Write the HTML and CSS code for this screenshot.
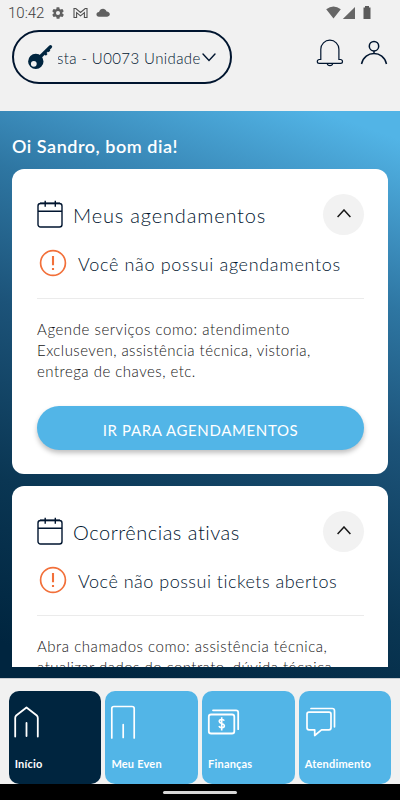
FILE: index.html
```html
<!DOCTYPE html>
<html lang="pt-BR">
<head>
<meta charset="utf-8">
<meta name="viewport" content="width=device-width, initial-scale=1">
<title>Início</title>
<link rel="stylesheet" href="styles.css">
</head>
<body>
<div class="app">
  <div class="status">
    <span class="time">10:42</span>
    <svg class="gear" width="14" height="14" viewBox="0 0 24 24"><path d="M19.4 13a7.600 7.600 0 0 0 0-2l2.100-1.700c.2-.1.3-.4.1-.6l-2-3.500c-.1-.2-.4-.3-.6-.2l-2.500 1a7.300 7.300 0 0 0-1.700-1l-.4-2.600a.5.5 0 0 0-.5-.4h-4a.5.5 0 0 0-.5.400L9.200 5a8 8 0 0 0-1.700 1L5 5c-.2-.1-.5 0-.6.200l-2 3.500c-.1.200-.1.500.1.600L4.600 11a8 8 0 0 0 0 2l-2.100 1.700c-.2.100-.2.400-.1.600l2 3.500c.1.200.4.300.6.200l2.500-1c.5.400 1.100.7 1.700 1l.4 2.600c0 .2.200.4.500.4h4c.2 0 .5-.2.500-.4l.4-2.600c.6-.3 1.200-.6 1.700-1l2.500 1c.2.100.5 0 .6-.2l2-3.500c.1-.2.100-.5-.1-.6zM12 15.500a3.500 3.500 0 1 1 0-7 3.500 3.500 0 0 1 0 7z" fill="#606060"/></svg>
    <svg class="mail" width="15" height="12" viewBox="0 0 15 12"><path d="M1 10.500v-9h1.800l4.700 4 4.700-4H14v9h-2.600V5.600L7.500 8.900 3.600 5.600v4.900z" fill="none" stroke="#505050" stroke-width="1.100"/></svg>
    <svg class="cloud" width="14" height="9" viewBox="0 0 14 9"><path d="M3 8.700C-.6 8.600-.2 4 3 4 4 .3 9-.7 10.600 3.500c3.800 0 4.500 5 .6 5.200z" fill="#606060"/></svg>
    <svg class="signals" width="46" height="14" viewBox="0 0 46 14"><path d="M.2 3.200Q7.500-2 14.800 3.200L7.500 12.500zM29 1v12H16.800z" fill="#666"/><path d="M39 0h4v1.500h1.500V13h-7V1.500H39z" fill="#5b5b5b"/></svg>
  </div>
  <header class="header">
    <div class="unit">
      <svg width="26" height="26" viewBox="0 0 26 26"><path d="M23.500 2.700 13 13" stroke="#00253f" stroke-width="3.300" stroke-linecap="round"/><path d="m17.300 8.500 2.400 2.400M20.500 5.300l2 2" stroke="#00253f" stroke-width="2.400"/><path fill-rule="evenodd" d="M8.800 9.700a7.700 7.700 0 1 0 0 15.400 7.700 7.700 0 0 0 0-15.400zM6.800 16.900a2.900 2.900 0 1 1 0 5.800 2.900 2.900 0 0 1 0-5.800z" fill="#00253f"/></svg>
      <span class="unit-window"><span class="unit-name">sta - U0073 Unidade</span></span>
      <svg class="down" width="14" height="9" viewBox="0 0 14 9"><path d="m1 1 6 6.500L13 1" fill="none" stroke="#00152f" stroke-width="1.400" stroke-linecap="round"/></svg>
    </div>
    <svg class="bell" width="28" height="30" viewBox="0 0 28 30"><path d="M4.800 21.500V11.200a9 9 0 0 1 18.100 0v10.300h1.700a1.900 1.900 0 0 1 0 3.800H3.200a1.900 1.900 0 0 1 0-3.800z" fill="none" stroke="#00152f" stroke-width="1.200"/><path d="M11.200 25.500c.5 2.900 5 2.900 5.500 0" fill="none" stroke="#00152f" stroke-width="1.200"/></svg>
    <svg class="user" width="28" height="26" viewBox="0 0 28 26"><circle cx="14" cy="6.200" r="4.700" fill="none" stroke="#00152f" stroke-width="1.500"/><path d="M14 11v2.500M1.500 24c3-14 22-14 25 0" fill="none" stroke="#00152f" stroke-width="1.500"/></svg>
  </header>
  <main class="main">
    <div class="scroll">
      <h1 class="greeting">Oi Sandro, bom dia!</h1>
      <section class="card">
        <div class="card-head">
          <svg class="cal" width="26" height="28" viewBox="0 0 26 28"><rect x="1" y="3.500" width="24" height="23.500" rx="2.500" fill="none" stroke="#00152f" stroke-width="1.400"/><path d="M1 11.300h24M8.200.8v6M18.300.8v6" stroke="#00152f" stroke-width="1.400"/><path d="M3 3.300h20" stroke="#00152f" stroke-width="1.600"/></svg>
          <h2 class="title t1">Meus agendamentos</h2>
          <span class="toggle"><svg width="14" height="9" viewBox="0 0 14 9"><path d="m.6 8 6.400-7 6.400 7" fill="none" stroke="#181818" stroke-width="1.500"/></svg></span>
        </div>
        <div class="notice">
          <svg width="28" height="28" viewBox="0 0 28 28"><circle cx="14" cy="14" r="12.400" fill="none" stroke="#f2703a" stroke-width="1.700"/><path d="M14 7v9.300M14 19v2" stroke="#f2703a" stroke-width="2.100"/></svg>
          <span class="n1">Você não possui agendamentos</span>
        </div>
        <p class="desc">
          <span class="d1">Agende serviços como: atendimento</span>
          <span class="d2">Excluseven, assistência técnica, vistoria,</span>
          <span class="d3">entrega de chaves, etc.</span>
        </p>
        <button class="cta">IR PARA AGENDAMENTOS</button>
      </section>
      <section class="card">
        <div class="card-head">
          <svg class="cal" width="26" height="28" viewBox="0 0 26 28"><rect x="1" y="3.500" width="24" height="23.500" rx="2.500" fill="none" stroke="#00152f" stroke-width="1.400"/><path d="M1 11.300h24M8.200.8v6M18.300.8v6" stroke="#00152f" stroke-width="1.400"/><path d="M3 3.300h20" stroke="#00152f" stroke-width="1.600"/></svg>
          <h2 class="title t2">Ocorrências ativas</h2>
          <span class="toggle"><svg width="14" height="9" viewBox="0 0 14 9"><path d="m.6 8 6.400-7 6.400 7" fill="none" stroke="#181818" stroke-width="1.500"/></svg></span>
        </div>
        <div class="notice">
          <svg width="28" height="28" viewBox="0 0 28 28"><circle cx="14" cy="14" r="12.400" fill="none" stroke="#f2703a" stroke-width="1.700"/><path d="M14 7v9.300M14 19v2" stroke="#f2703a" stroke-width="2.100"/></svg>
          <span class="n2">Você não possui tickets abertos</span>
        </div>
        <p class="desc">
          <span class="d4">Abra chamados como: assistência técnica,</span>
          <span class="d5">atualizar dados do contrato, dúvida técnica,</span>
        </p>
      </section>
    </div>
  </main>
  <nav class="tabs">
    <a class="tab active">
      <svg class="house" width="28" height="34" viewBox="0 0 28 34"><path d="M2.200 31.500V13q0-1.500 1-2.500l10.300-8 10.300 8q1 1 1 2.500v18.500M13.500 18v13" fill="none" stroke="#fff" stroke-width="1.800" stroke-linecap="round" stroke-linejoin="round"/></svg>
      <span class="l1">Início</span>
    </a>
    <a class="tab">
      <svg class="tower" width="28" height="34" viewBox="0 0 28 34"><path d="M1.800 33V3.500Q1.800 1.500 4 1.500h18q2.200 0 2.200 2V33M13.200 19.500V32.500" fill="none" stroke="#fff" stroke-width="1.700" stroke-linecap="round"/></svg>
      <span class="l2">Meu Even</span>
    </a>
    <a class="tab">
      <svg class="money" width="34" height="34" viewBox="0 0 34 34"><rect x="1.800" y="9.500" width="25.500" height="19" rx="2.300" fill="none" stroke="#fff" stroke-width="1.800"/><path d="M6 5.300h23q2.200 0 2.200 2.200v16.700" fill="none" stroke="#fff" stroke-width="1.800" stroke-linecap="round"/><path d="M17.300 15.700c-1.200-2-5.300-1.500-5 .9.300 2.300 5 1.400 5.100 4.100 0 2.400-4.400 2.700-5.500.5M14.700 12.200v13.200" fill="none" stroke="#fff" stroke-width="1.600"/></svg>
      <span class="l3">Finanças</span>
    </a>
    <a class="tab">
      <svg width="34" height="34" viewBox="0 0 34 34"><path d="M4 7.200h20q2 0 2 2v13.600q0 2-2 2h-7.500l-6.800 5.700v-5.700H4q-2 0-2-2V9.200q0-2 2-2z" fill="none" stroke="#fff" stroke-width="1.700" stroke-linejoin="round"/><path d="M6 3.500h21.200q2.300 0 2.300 2.300v16" fill="none" stroke="#fff" stroke-width="1.700" stroke-linecap="round"/></svg>
      <span class="l4">Atendimento</span>
    </a>
  </nav>
  <div class="system"><span class="pill"></span></div>
</div>
</body>
</html>
```
FILE: styles.css
```css
* { box-sizing: border-box; margin: 0; padding: 0; }
body { width: 400px; height: 800px; overflow: hidden; background: #f1f1f1; font-family: Lato, "Liberation Sans", sans-serif; font-weight: 300; color: #00152f; }
svg { display: block; flex: none; }
.app { height: 800px; display: flex; flex-direction: column; }
.status { height: 30px; flex: none; display: flex; align-items: center; padding: 0 28px 5px 8px; }
.time { width: 43px; font: 300 15px/18px Roboto, sans-serif; color: #404040; }
.mail { margin-left: 8px; }
.cloud { margin-left: 8px; }
.signals { margin-left: auto; }
.header { height: 81px; flex: none; display: flex; align-items: flex-start; padding: 0 11px 0 12px; }
.unit { width: 220px; height: 54px; border: 2px solid #00152f; border-radius: 27px; display: flex; align-items: center; padding-left: 13px; }
.unit-window { width: 144px; margin-left: 5px; overflow: hidden; white-space: nowrap; display: flex; }
.unit-name { font-size: 15px; letter-spacing: .4px; line-height: 22px; margin-left: -1px; padding-top: 1px; }
.bell { margin: 8px 0 0 84px; }
.user { margin: 10px 0 0 16px; }
.main { height: 567px; flex: none; padding: 0 12px 11px; background: linear-gradient(200deg, #52b4e6 4%, #3a8ab9 20%, #2e76a2 28%, #1c5379 47%, #0a3653 72%, #00253f 95%); }
.scroll { height: 556px; overflow: hidden; }
.greeting { height: 58px; padding-top: 24px; font-size: 18px; line-height: 22px; font-weight: 600; letter-spacing: .53px; color: #fff; white-space: nowrap; }
.card { height: 305px; margin-bottom: 12px; padding: 25px 24px 0 25px; background: #fff; border-radius: 12px; }
.card-head { height: 41px; display: flex; align-items: center; }
.cal { margin-top: -2px; }
.title { flex: 1; margin-left: 10px; padding-top: 1px; font-size: 20px; line-height: 26px; font-weight: 300; white-space: nowrap; }
.toggle { width: 41px; height: 41px; border-radius: 50%; background: #f2f2f2; display: flex; align-items: center; justify-content: center; padding-bottom: 3px; }
.notice { height: 64px; display: flex; align-items: flex-start; padding: 14px 0 0 2px; font-size: 18px; line-height: 24px; white-space: nowrap; border-bottom: 1px solid #ebebeb; }
.notice span { margin: 3px 0 0 11px; }
.desc { padding-top: 20px; color: #151515; font-size: 15px; line-height: 21px; }
.desc span { display: block; white-space: nowrap; }
.t1 { letter-spacing: .83px; }
.t2 { letter-spacing: .52px; }
.n1 { letter-spacing: .67px; }
.n2 { letter-spacing: .5px; }
.d1 { letter-spacing: .55px; }
.d2 { letter-spacing: .46px; }
.d3 { letter-spacing: .48px; }
.d4 { letter-spacing: .54px; }
.d5 { letter-spacing: .46px; }
.cta { display: block; width: 327px; height: 44px; margin-top: 24px; padding-top: 4px; border: 0; border-radius: 22px; background: #52b5e7; box-shadow: 0 3px 5px rgba(0,0,0,.25); color: #fff; font: 400 15px/20px Lato, sans-serif; letter-spacing: .63px; white-space: nowrap; }
.tabs { height: 106px; flex: none; padding: 12px 8px 0 8.700px; display: flex; gap: 4.100px; background: #f1f1f1; border-top: 1px solid #c8ccd0; }
.tab { width: 92.600px; flex: none; height: 93px; padding: 14px 0 0 6px; border-radius: 10px; background: #52b5e7; color: #fff; font-size: 11px; font-weight: 700; letter-spacing: .2px; }
.tab.active { background: #00253f; }
.tab span { display: block; margin-top: 17px; line-height: 16px; white-space: nowrap; }
.house, .tower { margin-left: -1.300px; }
.money { margin-left: -1px; }
.system { height: 16px; flex: none; background: #000; display: flex; justify-content: center; padding-top: 7px; }
.pill { width: 74px; height: 3px; border-radius: 2px; background: #d8d8d8; }
```
